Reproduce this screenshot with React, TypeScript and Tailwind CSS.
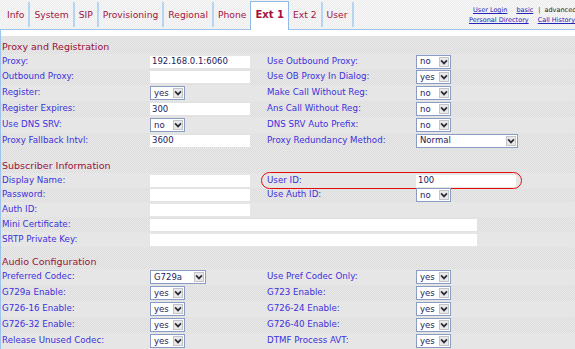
import React from 'react'

type Field =
  | { kind: 'input'; value?: string; width?: number }
  | { kind: 'select'; value: string; width?: number }
  | { kind: 'none' }

type Row = {
  h: number
  label: string
  field: Field
  label2?: string
  field2?: Field
  wide?: boolean
  mark?: boolean
}

const font = { fontFamily: '"DejaVu Sans", Verdana, sans-serif' }

const tabs = ['Info', 'System', 'SIP', 'Provisioning', 'Regional', 'Phone', 'Ext 1', 'Ext 2', 'User']

const proxyRows: Row[] = [
  { h: 15, label: 'Proxy:', field: { kind: 'input', value: '192.168.0.1:6060' }, label2: 'Use Outbound Proxy:', field2: { kind: 'select', value: 'no' } },
  { h: 16, label: 'Outbound Proxy:', field: { kind: 'input' }, label2: 'Use OB Proxy In Dialog:', field2: { kind: 'select', value: 'yes' } },
  { h: 16, label: 'Register:', field: { kind: 'select', value: 'yes' }, label2: 'Make Call Without Reg:', field2: { kind: 'select', value: 'no' } },
  { h: 16, label: 'Register Expires:', field: { kind: 'input', value: '300' }, label2: 'Ans Call Without Reg:', field2: { kind: 'select', value: 'no' } },
  { h: 16, label: 'Use DNS SRV:', field: { kind: 'select', value: 'no' }, label2: 'DNS SRV Auto Prefix:', field2: { kind: 'select', value: 'no' } },
  { h: 15, label: 'Proxy Fallback Intvl:', field: { kind: 'input', value: '3600' }, label2: 'Proxy Redundancy Method:', field2: { kind: 'select', value: 'Normal', width: 102 } },
]

const subscriberRows: Row[] = [
  { h: 15, label: 'Display Name:', field: { kind: 'input' }, label2: 'User ID:', field2: { kind: 'input', value: '100' }, mark: true },
  { h: 14, label: 'Password:', field: { kind: 'input' }, label2: 'Use Auth ID:', field2: { kind: 'select', value: 'no' } },
  { h: 15, label: 'Auth ID:', field: { kind: 'input' }, label2: '', field2: { kind: 'none' } },
  { h: 15, label: 'Mini Certificate:', field: { kind: 'input', width: 327 }, wide: true },
  { h: 15, label: 'SRTP Private Key:', field: { kind: 'input', width: 327 }, wide: true },
]

const audioRows: Row[] = [
  { h: 16, label: 'Preferred Codec:', field: { kind: 'select', value: 'G729a', width: 56 }, label2: 'Use Pref Codec Only:', field2: { kind: 'select', value: 'yes' } },
  { h: 16, label: 'G729a Enable:', field: { kind: 'select', value: 'yes' }, label2: 'G723 Enable:', field2: { kind: 'select', value: 'yes' } },
  { h: 16, label: 'G726-16 Enable:', field: { kind: 'select', value: 'yes' }, label2: 'G726-24 Enable:', field2: { kind: 'select', value: 'yes' } },
  { h: 16, label: 'G726-32 Enable:', field: { kind: 'select', value: 'yes' }, label2: 'G726-40 Enable:', field2: { kind: 'select', value: 'yes' } },
  { h: 16, label: 'Release Unused Codec:', field: { kind: 'select', value: 'yes' }, label2: 'DTMF Process AVT:', field2: { kind: 'select', value: 'yes' } },
]

function Chevron() {
  return (
    <svg width="9" height="8" viewBox="0 0 9 8">
      <path d="M1.2 2.2 L4.5 5.6 L7.8 2.2" fill="none" stroke="#2b2b3a" strokeWidth="1.9" />
    </svg>
  )
}

function Control({ field }: { field: Field }) {
  if (field.kind === 'none') return null
  if (field.kind === 'input') {
    return (
      <div
        className="flex h-[12px] items-center bg-white pl-[2px] text-[8.5px] text-[#1c1c5c]"
        style={{ width: field.width ?? 100 }}
      >
        {field.value}
      </div>
    )
  }
  return (
    <div
      className="flex h-[14px] items-stretch border border-[#8a9bc6] bg-white text-[8.5px] text-[#1c1c5c]"
      style={{ width: field.width ?? 35 }}
    >
      <div className="flex flex-1 items-center pl-[3px]">{field.value}</div>
      <div className="m-[1px] flex w-[10px] items-center justify-center border border-[#c4c4c4] bg-[#e9e9e9]">
        <Chevron />
      </div>
    </div>
  )
}

function Label({ text }: { text: string }) {
  return <div className="whitespace-nowrap pl-[5px] text-[8.7px] text-[#3d30dc]">{text}</div>
}

function Section({ title, rows }: { title: string; rows: Row[] }) {
  return (
    <div>
      <div className="flex h-[14px] items-center pl-[1px] text-[9.5px] text-[#9a1038]">{title}</div>
      {rows.map((r, i) => (
        <div
          key={r.label}
          className={`grid grid-cols-[149px_112px_154px_1fr] items-center ${
            i % 2 === 0
              ? 'bg-[#e6e6e6]'
              : 'bg-[image:repeating-conic-gradient(#dcdcdc_0%_25%,#e9e9e9_0%_50%)] bg-[length:2px_2px]'
          }`}
          style={{ height: r.h }}
        >
          <div className="whitespace-nowrap pl-[1px] text-[8.7px] text-[#3d30dc]">{r.label}</div>
          {r.wide ? (
            <div className="col-span-3">
              <Control field={r.field} />
            </div>
          ) : (
            <>
              <div>
                <Control field={r.field} />
              </div>
              {r.mark ? (
                <div className="col-span-2 grid h-[15px] w-[259px] grid-cols-[154px_1fr] items-center rounded-[8px] outline outline-[1.5px] outline-[#e30c0c]">
                  <Label text={r.label2 ?? ''} />
                  <div>
                    <Control field={r.field2 ?? { kind: 'none' }} />
                  </div>
                </div>
              ) : (
                <>
                  <Label text={r.label2 ?? ''} />
                  <div>
                    <Control field={r.field2 ?? { kind: 'none' }} />
                  </div>
                </>
              )}
            </>
          )}
        </div>
      ))}
    </div>
  )
}

export default function App() {
  return (
    <div className="h-[349px] w-[575px] overflow-hidden bg-white" style={font}>
      {/* tab bar */}
      <div className="flex h-[30px] border-b border-[#9cc4ec] bg-[image:repeating-conic-gradient(#ececec_0%_25%,#f7f7f7_0%_50%)] bg-[length:2px_2px] pl-[3px]">
        {tabs.map((t) =>
          t === 'Ext 1' ? (
            <div
              key={t}
              className="relative -mb-[1px] -ml-[2px] mt-[1px] flex items-start border border-b-0 border-[#8fbbe8] bg-white px-[4px] pt-[5px] text-[10px] font-bold text-[#a3123f]"
            >
              {t}
            </div>
          ) : (
            <div
              key={t}
              className="my-[2px] flex items-center border-r-2 border-[#b6d5f3] px-[4px] pt-[1px] text-[9.2px] text-[#a3123f]"
            >
              {t}
            </div>
          )
        )}
        <div className="flex-1" />
        <div className="w-[106px] shrink-0 whitespace-nowrap pt-[5px] text-[6.5px] leading-[10px]">
          <div className="pl-[4px]">
            <span className="text-[#2424b8] underline">User Login</span>
            <span className="ml-[9px] text-[#2424b8] underline">basic</span>
            <span className="ml-[5px] text-[#333]">|</span>
            <span className="ml-[4px] text-[#222]">advanced</span>
          </div>
          <div>
            <span className="text-[#2424b8] underline">Personal Directory</span>
            <span className="ml-[9px] text-[#2424b8] underline">Call History</span>
          </div>
        </div>
      </div>

      {/* content */}
      <div className="border-l border-[#9cc4ec]">
        <div className="h-[6px] bg-white" />
        <div className="bg-[image:repeating-conic-gradient(#dcdcdc_0%_25%,#e9e9e9_0%_50%)] bg-[length:2px_2px] pt-[4px]">
          <Section title="Proxy and Registration" rows={proxyRows} />
          <div className="h-[11px]" />
          <Section title="Subscriber Information" rows={subscriberRows} />
          <div className="h-[8px]" />
          <Section title="Audio Configuration" rows={audioRows} />
        </div>
      </div>
    </div>
  )
}
